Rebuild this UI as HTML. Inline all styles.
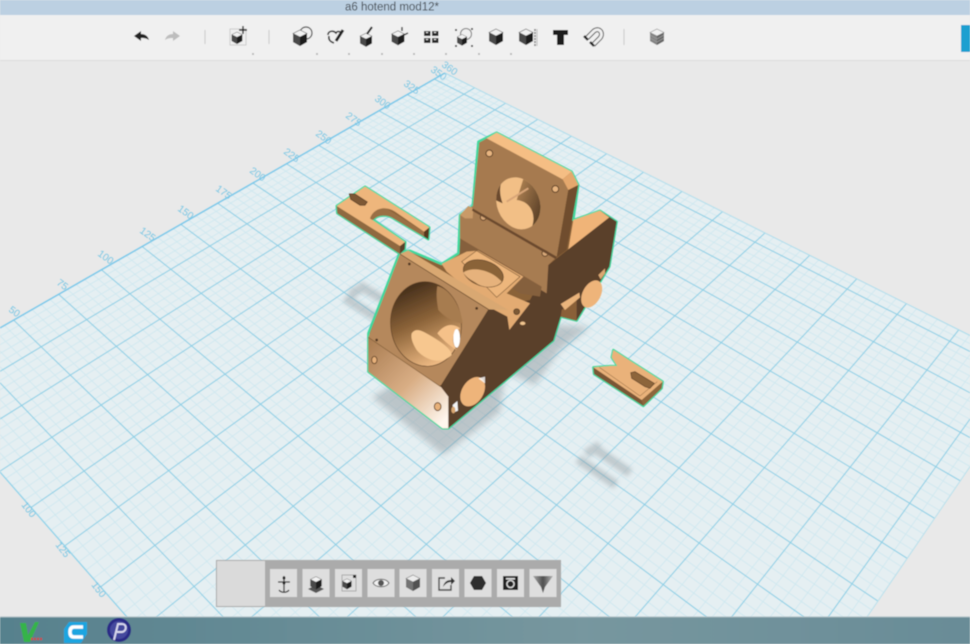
<!DOCTYPE html>
<html lang="en"><head><meta charset="utf-8"><title>a6 hotend mod12*</title>
<style>
html,body{margin:0;padding:0;background:#e9e9e9;width:970px;height:644px;overflow:hidden}
body{position:relative}
svg{display:block;position:absolute;left:0;top:0;overflow:hidden}
text{font-family:"Liberation Sans",sans-serif}
</style></head><body>
<svg xmlns="http://www.w3.org/2000/svg" width="970" height="644" viewBox="0 0 970 644">
<defs>
<filter id="b1" x="0" y="0" width="100%" height="100%"><feGaussianBlur stdDeviation="0.5"/></filter>
<filter id="b2" x="-2%" y="-2%" width="104%" height="104%"><feGaussianBlur stdDeviation="1.9"/></filter>
<filter id="sh" x="-30%" y="-30%" width="160%" height="160%"><feGaussianBlur stdDeviation="3.5"/></filter>
<filter id="sh2" x="-30%" y="-30%" width="160%" height="160%"><feGaussianBlur stdDeviation="2.4"/></filter>
<linearGradient id="hole" x1="0.3" y1="0" x2="0.6" y2="1"><stop offset="0" stop-color="#3f2a18"/><stop offset=".45" stop-color="#8a6238"/><stop offset="1" stop-color="#f2bd86"/></linearGradient>
<linearGradient id="low" x1="0" y1="0" x2="0.85" y2="1"><stop offset="0" stop-color="#a87b50"/><stop offset=".55" stop-color="#d9ae85"/><stop offset="1" stop-color="#fff7ee"/></linearGradient>
<linearGradient id="hole2" x1="0" y1="0" x2="1" y2="0.6"><stop offset="0" stop-color="#b98a58"/><stop offset="1" stop-color="#46301c"/></linearGradient>
<linearGradient id="tb" x1="0" y1="0" x2="1" y2="0"><stop offset="0" stop-color="#57818d"/><stop offset=".6" stop-color="#77979f"/><stop offset="1" stop-color="#698c97"/></linearGradient>
<linearGradient id="fl" x1="0" y1="0" x2="1" y2="0"><stop offset="0" stop-color="#a8a8a8"/><stop offset=".5" stop-color="#4f4f4f"/><stop offset="1" stop-color="#b5b5b5"/></linearGradient>
<clipPath id="upperHole"><ellipse cx="595" cy="250" rx="64" ry="80" transform="rotate(-22 595 250)"/></clipPath>
<g id="cube"><path d="M0-8 7-4.5V4L0 8-7 4V-4.5Z" fill="#2e2e2e"/><path d="M0-8 7-4.5 0-1-7-4.5Z" fill="#f2f2f2" stroke="#555" stroke-width=".6"/><path d="M0-1 7-4.5V4L0 8Z" fill="#1c1c1c"/><path d="M0-1-7-4.5V4L0 8Z" fill="#4a4a4a"/></g>
</defs>

<rect width="970" height="644" fill="#e9e9e9"/>

<g filter="url(#b1)">
<path d="M0 328 445 73 970 335.500 970 466.600 867 617 127 617 0 472Z" fill="#e5eff2"/>
<g id="grid" fill="none"></g>
<path d="M0 328 445 73" stroke="#78c8ea" stroke-width="1.5" fill="none"/>
<path d="M445 73 970 335.500" stroke="#a9dcec" stroke-width="1" fill="none"/>
<path d="M0 472 127 617" stroke="#8cd2ea" stroke-width="1.3" fill="none"/>
<path d="M970 466.600 867 617" stroke="#b8e0ec" stroke-width="1" fill="none"/>
<g font-size="10" fill="#79c6e4">
<text transform="translate(8 311) rotate(36)">50</text>
<text transform="translate(56 284) rotate(36)">75</text>
<text transform="translate(97 255) rotate(36)">100</text>
<text transform="translate(139 232) rotate(36)">125</text>
<text transform="translate(177 210) rotate(36)">150</text>
<text transform="translate(215 190) rotate(36)">175</text>
<text transform="translate(249 172) rotate(36)">200</text>
<text transform="translate(283 153) rotate(36)">225</text>
<text transform="translate(315 135) rotate(36)">250</text>
<text transform="translate(345 117) rotate(36)">275</text>
<text transform="translate(374 100) rotate(36)">300</text>
<text transform="translate(403 85) rotate(36)">325</text>
<text transform="translate(430 71) rotate(36)">350</text>
<text transform="translate(441 66) rotate(36)">360</text>
<text transform="translate(21 505) rotate(52)">100</text>
<text transform="translate(55 545) rotate(52)">125</text>
<text transform="translate(91 585) rotate(52)">150</text>
</g>
</g>

<!-- shadows -->
<path d="M372 397 410 375 560 325 590 327 560 350 535 385 505 372 500 412 443 455Z" fill="#8f989d" opacity=".48" filter="url(#sh)"/>
<g fill="none" stroke="#8f989d" stroke-width="9" opacity=".42" filter="url(#sh2)">
<path d="M345 298 380 320M360 286 384 300M350 295 366 285"/>
<path d="M578 459 616 485M595 449 630 473M586 454 600 445"/>
</g>

<!-- model: coordinates traced at 3x -->
<g transform="translate(320 120) scale(.33333)" filter="url(#b2)">
<!-- outlines -->
<g fill="#8a6238" stroke="#3fd89c" stroke-width="7" stroke-linejoin="round">
<path d="M530 38 755 155 775 195 760 300 840 272 890 305 868 440 770 602 722 590 700 662 385 925 368 925 145 755 145 640 240 395 270 392 365 432 415 400 420 285 458 258 475 65Z"/>
<path d="M50 258 135 200 328 322 325 358 312 350 220 295C200 282 170 285 160 300L256 366 254 388 240 402 52 280Z"/>
<path d="M820 742 870 738 892 738 875 712 880 690 1028 785 1025 805 970 858 822 762Z"/>
</g>

<!-- right back block -->
<path d="M760 300 840 272 868 292 745 388Z" fill="#f0b478"/>
<path d="M840 272 890 305 868 440 770 602 722 590 700 662 385 925 368 925 360 800 505 565 630 540 685 435 745 388 868 292Z" fill="#5a3f2a"/>
<path d="M725 570 770 530 770 602 722 590Z" fill="#8a6038"/>
<path d="M722 552 778 518 780 532 735 570Z" fill="#eab47c"/>
<ellipse cx="815" cy="522" rx="27" ry="44" transform="rotate(28 815 522)" fill="#eeb47a"/>
<path d="M835 465 855 445 855 460 842 478Z" fill="#dba872"/>

<!-- lower upright plate -->
<path d="M420 285 458 258 712 408 685 435 680 520 420 365Z" fill="#a77b51"/>
<path d="M420 355 665 500 660 530 600 520 420 400Z" fill="#85603c"/>
<path d="M420 285 445 258 460 265 458 295 435 295Z" fill="#c99a68"/>
<circle cx="490" cy="292" r="9" fill="#d8a878" stroke="#5e4026" stroke-width="3"/>
<circle cx="675" cy="400" r="9" fill="#d8a878" stroke="#5e4026" stroke-width="3"/>

<!-- upper plate -->
<path d="M478 68 500 55 728 178 745 210 710 410 458 265Z" fill="#a67a50"/>
<path d="M500 55 530 38 755 155 728 178Z" fill="#f5be84"/>
<path d="M728 178 755 155 775 195 745 210Z" fill="#e5a86d"/>
<path d="M745 210 775 195 740 390 710 412Z" fill="#704d2e"/>
<path d="M458 265 710 410 708 418 456 272Z" fill="#6a4a2d"/>
<ellipse cx="595" cy="250" rx="64" ry="80" transform="rotate(-22 595 250)" fill="#f2bf86"/>
<g clip-path="url(#upperHole)">
<path d="M612 170H690V340H625C655 300 640 245 590 240Z" fill="url(#hole2)"/>
<path d="M525 170 552 170C540 190 535 215 548 250L525 240Z" fill="#6a4a2d"/>
<path d="M560 245 625 205" stroke="#d8a578" stroke-width="6"/>
</g>
<circle cx="508" cy="100" r="10" fill="#e8b580" stroke="#5e4026" stroke-width="3"/>
<circle cx="706" cy="207" r="10" fill="#e8b580" stroke="#5e4026" stroke-width="3"/>

<!-- centre cradle -->
<path d="M365 432 440 395 475 392 610 470 560 520 630 550 568 630 562 590 505 560 380 455Z" fill="#e3ab72"/>
<path d="M425 425 470 392 600 470 530 532Z" fill="#edb67c" stroke="#7f5c38" stroke-width="2"/>
<ellipse cx="490" cy="460" rx="62" ry="38" transform="rotate(18 490 460)" fill="#8a6338" stroke="#5e4026" stroke-width="2"/>
<path d="M430 458C450 440 510 445 545 485 530 505 490 505 470 490 455 480 440 475 430 458Z" fill="#e6b27c"/>
<circle cx="590" cy="575" r="9" fill="#7d5a36" stroke="#4e3420" stroke-width="2"/>
<ellipse cx="608" cy="610" rx="9" ry="6" fill="#f2c690" stroke="#6a4a2d" stroke-width="2"/>

<!-- fan face -->
<path d="M240 402 505 568 360 800 145 652Z" fill="#b5885b"/>
<path d="M265 392 565 570 505 568 240 402Z" fill="#d9a872"/>
<path d="M240 402 505 568" stroke="#5e4026" stroke-width="2" fill="none"/>
<ellipse cx="318" cy="612" rx="106" ry="127" transform="rotate(-5 318 612)" fill="url(#hole)" stroke="#5e4026" stroke-width="2"/>
<path d="M352 498C385 505 420 550 428 610 405 610 372 590 355 570 350 545 348 520 352 498Z" fill="#a77c50"/>
<path d="M275 640C290 620 310 635 345 655 370 670 395 690 395 705 360 740 310 715 290 690 278 670 272 655 275 640Z" fill="#f7c78f"/>
<path d="M352 640C375 610 400 610 420 625 395 640 392 665 410 690 385 675 365 655 352 640Z" fill="#f5c189"/>
<ellipse cx="410" cy="655" rx="10" ry="28" fill="#fff"/>
<g fill="#4e3420"><circle cx="268" cy="432" r="4"/><circle cx="470" cy="565" r="4"/><circle cx="170" cy="660" r="4"/><circle cx="362" cy="800" r="4"/></g>

<!-- lower front face -->
<path d="M145 652 362 800 385 830 385 925 368 925 145 755Z" fill="url(#low)"/>
<path d="M145 652 362 800" stroke="#7f5c38" stroke-width="2" fill="none"/>
<ellipse cx="163" cy="720" rx="8" ry="11" fill="#e7b17a" stroke="#6a4a2d" stroke-width="3"/>
<ellipse cx="353" cy="860" rx="10" ry="12" fill="#e7b17a" stroke="#6a4a2d" stroke-width="3"/>

<!-- side details -->
<ellipse cx="458" cy="815" rx="32" ry="48" transform="rotate(32 458 815)" fill="#eeb47a"/>
<path d="M475 775 495 770 495 790Z" fill="#fff" opacity=".8"/>
<path d="M398 855 412 843 414 872 400 878Z" fill="#f4f4f4"/>
<ellipse cx="400" cy="870" rx="6" ry="10" fill="#d8a670"/>

<!-- left small part -->
<path d="M50 258 240 378 240 402 52 280Z" fill="#8f693f"/>
<path d="M240 378 256 366 254 388 240 402Z" fill="#5a3f2a"/>
<path d="M312 335 328 322 325 358 312 350Z" fill="#55391f"/>
<path d="M150 293C155 270 175 262 195 262L312 335 312 350 220 295C200 282 170 285 160 300Z" fill="#9a7045"/>
<path d="M50 258 135 200 328 322 312 335 225 275C195 255 160 265 150 295L255 366 240 378Z" fill="#eeb67c"/>
<path d="M88 222 105 222 142 246 135 256 120 256 92 238Z" fill="#7d5834" stroke="#4e3420" stroke-width="2"/>

<!-- right small part -->
<path d="M820 742 965 840 970 858 822 762Z" fill="#7a5634"/>
<path d="M965 840 1028 785 1025 805 970 858Z" fill="#8d653b"/>
<path d="M820 742 870 738 892 738 875 712 880 690 1028 785 965 840Z" fill="#eab27a"/>
<path d="M838 742 960 828 1012 785" fill="none" stroke="#a77c50" stroke-width="2"/>
<path d="M932 758 945 755 1003 790 990 805 975 800 935 775Z" fill="#8d653b" stroke="#5e4026" stroke-width="2"/>
</g>

<!-- title bar -->
<g filter="url(#b1)">
<rect y="0" width="970" height="15" fill="#bcd0e2"/>
<text x="345" y="10.500" font-size="11.500" fill="#3d4248">a6 hotend mod12*</text>
<rect y="15" width="970" height="45" fill="#f0f0f0"/>
<rect y="60" width="970" height="1" fill="#dcdcdc"/>
<rect x="961" y="25" width="9" height="27" fill="#1a9fd0"/>

<!-- undo/redo -->
<path d="M134 36 141 31V34C145 34 148 36 149 40 146 38 144 38 141 38V41Z" fill="#222"/>
<path d="M180 36 173 31V34C169 34 166 36 165 40 168 38 170 38 173 38V41Z" fill="#bdbdbd"/>
<g stroke="#c8c8c8" stroke-width="1"><path d="M205 30V44M269 30V44M624 29V45"/></g>

<!-- box plus -->
<rect x="230" y="29" width="16" height="16" fill="none" stroke="#ccc"/>
<use href="#cube" transform="translate(237 38) scale(.75)"/>
<path d="M243 26V34M239 30H247" stroke="#222" stroke-width="1.400"/>

<!-- union -->
<circle cx="306" cy="33" r="6" fill="none" stroke="#444" stroke-width="1.200"/>
<use href="#cube" transform="translate(300 38)"/>
<!-- sketch -->
<path d="M328 35C328 31 333 30 336 33 337 31 340 31 341 33" fill="none" stroke="#333" stroke-width="1.600"/>
<path d="M329 36C328 40 331 42 334 43" fill="none" stroke="#333" stroke-width="1.600"/>
<path d="M336 41 343 30" stroke="#222" stroke-width="3"/>
<!-- brush cube -->
<use href="#cube" transform="translate(366 40) scale(.85)"/>
<path d="M367 34 372 27" stroke="#222" stroke-width="2"/>
<!-- cube move -->
<use href="#cube" transform="translate(398 38) scale(.9)"/>
<path d="M404 35 408 33M402 27V31" stroke="#333" stroke-width="1.400"/>
<!-- pattern -->
<g fill="#2a2a2a"><path d="M424 31h6.500v5h-6.500zM432 31h6.500v5h-6.500zM424 38h6.500v5h-6.500zM432 38h6.500v5h-6.500z"/></g>
<g fill="#e8e8e8"><rect x="426" y="32" width="2" height="1"/><rect x="434" y="32" width="2" height="1"/><rect x="426" y="39" width="2" height="1"/><rect x="434" y="39" width="2" height="1"/></g>
<!-- scale -->
<circle cx="466" cy="34" r="5.500" fill="none" stroke="#777"/>
<use href="#cube" transform="translate(462 40) scale(.7)"/>
<g fill="#555"><rect x="455" y="29" width="2" height="2"/><rect x="471" y="28" width="2" height="2"/><rect x="455" y="45" width="2" height="2"/><rect x="471" y="45" width="2" height="2"/></g>
<!-- others -->
<use href="#cube" transform="translate(496 37)"/>
<use href="#cube" transform="translate(526 37)"/>
<path d="M535 29V46" stroke="#777" stroke-width="1.500" stroke-dasharray="2 1"/>
<path d="M537 29V46" stroke="#bbb"/>
<path d="M553 30H568V35H564V45H557V35H553Z" fill="#1f1f1f"/>
<path d="M587 38 594 31C599 27 604 33 600 38L593 45" fill="none" stroke="#555" stroke-width="5"/>
<path d="M587 38 594 31C599 27 604 33 600 38L593 45" fill="none" stroke="#f0f0f0" stroke-width="3"/>
<path d="M584 36 588 40M590 42 594 46" stroke="#222" stroke-width="2.400"/>
<use href="#cube" transform="translate(657 37)" opacity=".65"/>
<path d="M650 35 657 39 664 35M650 38 657 42 664 38" stroke="#999" fill="none" stroke-width=".8"/>

<!-- dots -->
<g fill="#bcbcbc"><rect x="252" y="53" width="2" height="2"/><rect x="316" y="53" width="2" height="2"/><rect x="348" y="53" width="2" height="2"/><rect x="381" y="53" width="2" height="2"/><rect x="413" y="53" width="2" height="2"/><rect x="445" y="53" width="2" height="2"/><rect x="478" y="53" width="2" height="2"/><rect x="510" y="53" width="2" height="2"/></g>

<!-- bottom panel -->
<rect x="216" y="560" width="345" height="47" fill="#ababab"/>
<rect x="217" y="561" width="48" height="45" fill="#dadada"/>
<g fill="#dedede">
<rect x="270" y="569" width="27" height="28"/><rect x="302.500" y="569" width="27" height="28"/><rect x="335" y="569" width="27" height="28"/><rect x="367.500" y="569" width="27" height="28"/><rect x="399.500" y="569" width="27" height="28"/><rect x="432" y="569" width="27" height="28"/><rect x="464.500" y="569" width="27" height="28"/><rect x="497" y="569" width="27" height="28"/><rect x="529.500" y="569" width="27" height="28"/>
</g>
<!-- move -->
<path d="M284 576V592M278 582H290M279 590C281 593 287 593 289 590" fill="none" stroke="#333" stroke-width="1.300"/>
<circle cx="284" cy="578" r="1.500" fill="#222"/><circle cx="284" cy="583" r="1.500" fill="#222"/>
<!-- cube on base -->
<path d="M308 589 316 585 324 589 316 593Z" fill="#555"/>
<use href="#cube" transform="translate(316 583) scale(.8)"/>
<!-- box corner -->
<rect x="342" y="575" width="14" height="16" fill="none" stroke="#aaa"/>
<use href="#cube" transform="translate(347 584) scale(.65)"/>
<rect x="353" y="575" width="3" height="3" fill="#222"/>
<!-- eye -->
<path d="M373 583C376 578 386 578 389 583 386 588 376 588 373 583Z" fill="#f2f2f2" stroke="#666"/>
<circle cx="381" cy="583" r="3" fill="#555"/>
<!-- cube -->
<use href="#cube" transform="translate(413 583)" opacity=".72"/>
<!-- share -->
<path d="M445 578H439V590H451V585" fill="none" stroke="#444" stroke-width="1.400"/>
<path d="M443 587C444 582 447 580 451 580V577L455 581 451 585V582C448 582 445 584 443 587Z" fill="#333"/>
<!-- hex -->
<path d="M474 576H482L486 583 482 590H474L470 583Z" fill="#2e2e2e"/>
<!-- camera -->
<rect x="503" y="576" width="15" height="14" fill="#222"/>
<circle cx="510.500" cy="584" r="3.600" fill="none" stroke="#ddd" stroke-width="1.400"/>
<rect x="506" y="578" width="9" height="1.500" fill="#ddd"/>
<!-- filter -->
<path d="M533 576H553L545 587 543 593 541 587Z" fill="url(#fl)"/>

<!-- taskbar -->
<rect y="617" width="970" height="27" fill="url(#tb)"/>
<rect y="616.500" width="970" height="1" fill="#a9bcc2"/>
<path d="M20 623H26L28 635 35 622H39L30 642H24Z" fill="#35b34a"/>
<path d="M31 639H42" stroke="#c8474b" stroke-width="2.500" stroke-dasharray="2 1"/>
<path d="M69 622H87V634L81 643H64V629Z" fill="#1ea5e0"/>
<path d="M83 627H74C71 627 70 629 70 632 70 635 71 637 74 637H83" fill="none" stroke="#fff" stroke-width="3.500"/>
<circle cx="119" cy="630" r="12" fill="#2a2c86"/>
<circle cx="119" cy="630" r="9" fill="#45489e"/>
<path d="M114 640 118 624H122C127 624 127 631 122 632H117" fill="none" stroke="#d8d8ee" stroke-width="2"/>
</g>
</svg>
<script>
(function(){
var g=0.4036,h=-0.414,a=708.6,b=401.6,d=-273.5,e=263,x0=-84,y0=376;
function P(u,v){var w=g*u+h*v+1;return [(a*u+b*v+x0)/w,(d*u+e*v+y0)/w];}
function seg(p,q){
 var t0=0,t1=1,dx=q[0]-p[0],dy=q[1]-p[1];
 var c=[[-dx,p[0]],[dx,970-p[0]],[-dy,p[1]],[dy,617-p[1]]];
 for(var i=0;i<4;i++){var m=c[i][0],n=c[i][1];
  if(m==0){if(n<0)return "";continue;}
  var r=n/m;
  if(m<0){if(r>t0)t0=r;}else{if(r<t1)t1=r;}
 }
 if(t0>=t1)return "";
 return "M"+(p[0]+t0*dx).toFixed(1)+" "+(p[1]+t0*dy).toFixed(1)+"L"+(p[0]+t1*dx).toFixed(1)+" "+(p[1]+t1*dy).toFixed(1);
}
var minor="",major="";
for(var i=5;i<360;i+=5){
 var t=i/360,s=seg(P(t,0),P(t,1))+seg(P(0,t),P(1,t));
 if(i%25==0){major+=s}else{minor+=s}
}
var el=document.getElementById("grid"),ns="http://www.w3.org/2000/svg";
function add(dd,c,w){var p=document.createElementNS(ns,"path");p.setAttribute("d",dd);p.setAttribute("stroke",c);p.setAttribute("stroke-width",w);el.appendChild(p);}
add(minor,"#cde7f0","0.8");
add(major,"#8ed0e6","1.1");
})();
</script>
</body></html>
